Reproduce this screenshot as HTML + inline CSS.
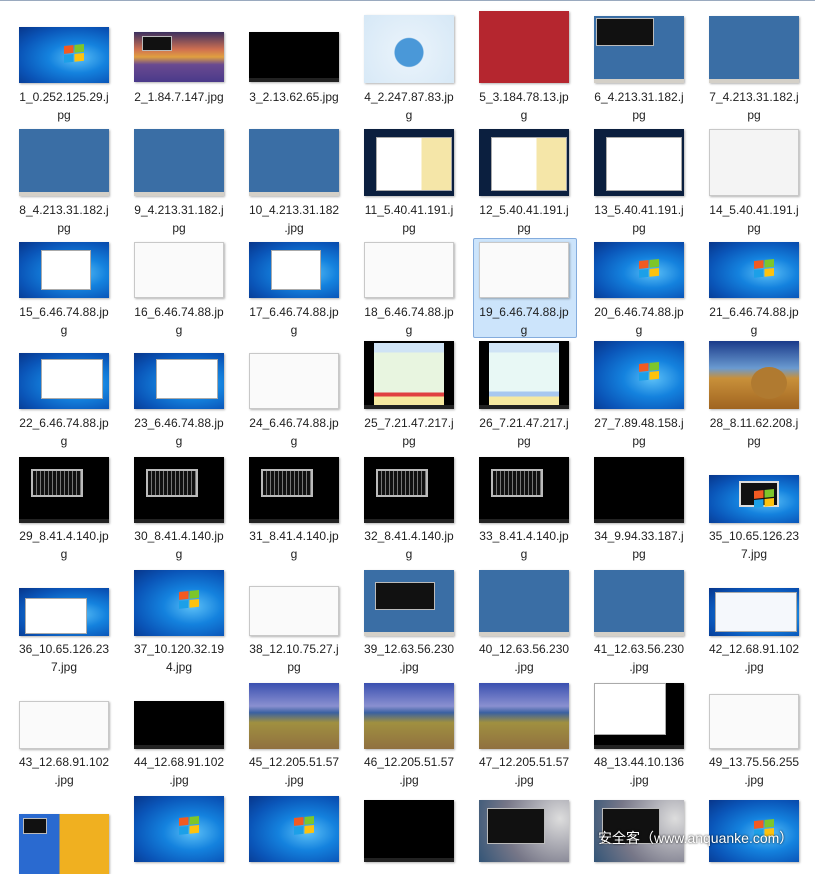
<!DOCTYPE html>
<html><head><meta charset="utf-8"><style>
body{margin:0;width:815px;height:857px;background:#fff;position:relative;overflow:hidden;font-family:"Liberation Sans","Noto Sans CJK SC",sans-serif;}
.top{position:absolute;left:0;top:0;width:815px;height:1px;background:#9aaabf}
.t{position:absolute;width:90px;box-shadow:1px 1px 2px rgba(0,0,0,.3);overflow:hidden}
.l{position:absolute;width:110px;text-align:center;font-size:12px;line-height:18px;color:#1e1e1e}
.sel{position:absolute;left:473px;top:238px;width:104px;height:100px;background:#cce4fb;border:1px solid #84acdd;border-radius:2px;box-sizing:border-box}
.w7{background:radial-gradient(ellipse at 65% 55%,#5cc0f7 0%,#1482de 35%,#0a55b8 70%,#07358a 100%)}
.w7::after{content:"";position:absolute;left:50%;top:32%;width:20px;height:17px;background:linear-gradient(90deg,#f25a22 0 48%,transparent 48% 52%,#7dc62a 52%) top/100% 46% no-repeat,linear-gradient(90deg,#1ca0e8 0 48%,transparent 48% 52%,#fdc20e 52%) bottom/100% 46% no-repeat;transform:skewY(-6deg)}
.bl{background:#3a6ea5}
.bl::after,.bk::after{content:"";position:absolute;left:0;bottom:0;width:100%;height:4px;background:#d4d0c8}
.bk{background:#000}
.bk::after{background:#222}
.wh{background:#fafafa;border:1px solid #c8c8c8;box-sizing:border-box}
.win{position:absolute;background:#fff;border:1px solid #aaa;z-index:1}
.cmd{position:absolute;background:#111;border:2px solid #bbb}
.wm{position:absolute;left:598px;top:828px;color:#fff;font-size:14px;text-shadow:0 0 2px #000}
</style></head><body>
<div class="top"></div>
<div class="sel"></div>

<div class="t w7" style="left:19px;top:27px;height:56px"></div>
<div class="t" style="left:134px;top:32px;height:50px;background:linear-gradient(#3a3060,#d07050 35%,#e0a040 50%,#6a4a90 65%,#4a3a8a)"><div class="cmd" style="left:8px;top:4px;width:28px;height:13px;border-width:1px"></div></div>
<div class="t bk" style="left:249px;top:32px;height:50px"></div>
<div class="t" style="left:364px;top:15px;height:68px;background:radial-gradient(circle at 50% 55%,#4a98d8 0 14px,#e6f1fa 15px,#d6e8f6)"></div>
<div class="t" style="left:479px;top:11px;height:72px;background:#b5262f"></div>
<div class="t bl" style="left:594px;top:16px;height:67px"><div class="cmd" style="left:2px;top:2px;width:56px;height:26px;border-width:1px"></div></div>
<div class="t bl" style="left:709px;top:16px;height:67px"></div>

<div class="l" style="left:9px;top:88px">1_0.252.125.29.j<br>pg</div>
<div class="l" style="left:124px;top:88px">2_1.84.7.147.jpg</div>
<div class="l" style="left:239px;top:88px">3_2.13.62.65.jpg</div>
<div class="l" style="left:354px;top:88px">4_2.247.87.83.jp<br>g</div>
<div class="l" style="left:469px;top:88px">5_3.184.78.13.jp<br>g</div>
<div class="l" style="left:584px;top:88px">6_4.213.31.182.j<br>pg</div>
<div class="l" style="left:699px;top:88px">7_4.213.31.182.j<br>pg</div>

<div class="t bl" style="left:19px;top:129px;height:67px"></div>
<div class="t bl" style="left:134px;top:129px;height:67px"></div>
<div class="t bl" style="left:249px;top:129px;height:67px"></div>
<div class="t" style="left:364px;top:129px;height:67px;background:#0b1f3f"><div class="win" style="left:12px;top:8px;width:74px;height:52px;background:linear-gradient(90deg,#fff 60%,#f5e6a8 60%)"></div></div>
<div class="t" style="left:479px;top:129px;height:67px;background:#0b1f3f"><div class="win" style="left:12px;top:8px;width:74px;height:52px;background:linear-gradient(90deg,#fff 60%,#f5e6a8 60%)"></div></div>
<div class="t" style="left:594px;top:129px;height:67px;background:#0b1f3f"><div class="win" style="left:12px;top:8px;width:74px;height:52px"></div></div>
<div class="t wh" style="left:709px;top:129px;height:67px;background:#f4f4f4"></div>

<div class="l" style="left:9px;top:201px">8_4.213.31.182.j<br>pg</div>
<div class="l" style="left:124px;top:201px">9_4.213.31.182.j<br>pg</div>
<div class="l" style="left:239px;top:201px">10_4.213.31.182<br>.jpg</div>
<div class="l" style="left:354px;top:201px">11_5.40.41.191.j<br>pg</div>
<div class="l" style="left:469px;top:201px">12_5.40.41.191.j<br>pg</div>
<div class="l" style="left:584px;top:201px">13_5.40.41.191.j<br>pg</div>
<div class="l" style="left:699px;top:201px">14_5.40.41.191.j<br>pg</div>

<div class="t w7" style="left:19px;top:242px;height:56px"><div class="win" style="left:22px;top:8px;width:48px;height:38px"></div></div>
<div class="t wh" style="left:134px;top:242px;height:56px"></div>
<div class="t w7" style="left:249px;top:242px;height:56px"><div class="win" style="left:22px;top:8px;width:48px;height:38px"></div></div>
<div class="t wh" style="left:364px;top:242px;height:56px"></div>
<div class="t wh" style="left:479px;top:242px;height:56px"></div>
<div class="t w7" style="left:594px;top:242px;height:56px"></div>
<div class="t w7" style="left:709px;top:242px;height:56px"></div>

<div class="l" style="left:9px;top:303px">15_6.46.74.88.jp<br>g</div>
<div class="l" style="left:124px;top:303px">16_6.46.74.88.jp<br>g</div>
<div class="l" style="left:239px;top:303px">17_6.46.74.88.jp<br>g</div>
<div class="l" style="left:354px;top:303px">18_6.46.74.88.jp<br>g</div>
<div class="l" style="left:469px;top:303px">19_6.46.74.88.jp<br>g</div>
<div class="l" style="left:584px;top:303px">20_6.46.74.88.jp<br>g</div>
<div class="l" style="left:699px;top:303px">21_6.46.74.88.jp<br>g</div>

<div class="t w7" style="left:19px;top:353px;height:56px"><div class="win" style="left:22px;top:6px;width:60px;height:38px"></div></div>
<div class="t w7" style="left:134px;top:353px;height:56px"><div class="win" style="left:22px;top:6px;width:60px;height:38px"></div></div>
<div class="t wh" style="left:249px;top:353px;height:56px"></div>
<div class="t bk" style="left:364px;top:341px;height:68px"><div style="position:absolute;left:10px;top:2px;width:70px;height:62px;background:linear-gradient(#cfe3f5 0 15%,#e8f5e0 15% 80%,#e04040 80% 86%,#f6e9a0 86%)"></div></div>
<div class="t bk" style="left:479px;top:341px;height:68px"><div style="position:absolute;left:10px;top:2px;width:70px;height:62px;background:linear-gradient(#cfe3f5 0 15%,#e8f8f5 15% 78%,#a8c8ef 78% 86%,#f6e9a0 86%)"></div></div>
<div class="t w7" style="left:594px;top:341px;height:68px"></div>
<div class="t" style="left:709px;top:341px;height:68px;background:linear-gradient(#1a3a8a,#6a9ad0 40%,#c8903a 55%,#a06420)"><div style="position:absolute;left:42px;top:26px;width:36px;height:32px;border-radius:50%;background:#b07a30"></div></div>

<div class="l" style="left:9px;top:414px">22_6.46.74.88.jp<br>g</div>
<div class="l" style="left:124px;top:414px">23_6.46.74.88.jp<br>g</div>
<div class="l" style="left:239px;top:414px">24_6.46.74.88.jp<br>g</div>
<div class="l" style="left:354px;top:414px">25_7.21.47.217.j<br>pg</div>
<div class="l" style="left:469px;top:414px">26_7.21.47.217.j<br>pg</div>
<div class="l" style="left:584px;top:414px">27_7.89.48.158.j<br>pg</div>
<div class="l" style="left:699px;top:414px">28_8.11.62.208.j<br>pg</div>

<div class="t bk" style="left:19px;top:457px;height:66px"><div class="cmd" style="left:12px;top:12px;width:48px;height:24px;background:repeating-linear-gradient(90deg,#111 0 3px,#777 3px 4px)"></div></div>
<div class="t bk" style="left:134px;top:457px;height:66px"><div class="cmd" style="left:12px;top:12px;width:48px;height:24px;background:repeating-linear-gradient(90deg,#111 0 3px,#777 3px 4px)"></div></div>
<div class="t bk" style="left:249px;top:457px;height:66px"><div class="cmd" style="left:12px;top:12px;width:48px;height:24px;background:repeating-linear-gradient(90deg,#111 0 3px,#777 3px 4px)"></div></div>
<div class="t bk" style="left:364px;top:457px;height:66px"><div class="cmd" style="left:12px;top:12px;width:48px;height:24px;background:repeating-linear-gradient(90deg,#111 0 3px,#777 3px 4px)"></div></div>
<div class="t bk" style="left:479px;top:457px;height:66px"><div class="cmd" style="left:12px;top:12px;width:48px;height:24px;background:repeating-linear-gradient(90deg,#111 0 3px,#777 3px 4px)"></div></div>
<div class="t bk" style="left:594px;top:457px;height:66px"></div>
<div class="t w7" style="left:709px;top:475px;height:48px"><div class="cmd" style="left:30px;top:6px;width:36px;height:22px;border-color:#ddd"></div></div>

<div class="l" style="left:9px;top:527px">29_8.41.4.140.jp<br>g</div>
<div class="l" style="left:124px;top:527px">30_8.41.4.140.jp<br>g</div>
<div class="l" style="left:239px;top:527px">31_8.41.4.140.jp<br>g</div>
<div class="l" style="left:354px;top:527px">32_8.41.4.140.jp<br>g</div>
<div class="l" style="left:469px;top:527px">33_8.41.4.140.jp<br>g</div>
<div class="l" style="left:584px;top:527px">34_9.94.33.187.j<br>pg</div>
<div class="l" style="left:699px;top:527px">35_10.65.126.23<br>7.jpg</div>

<div class="t w7" style="left:19px;top:588px;height:48px"><div class="win" style="left:6px;top:10px;width:60px;height:34px"></div></div>
<div class="t w7" style="left:134px;top:570px;height:66px"></div>
<div class="t wh" style="left:249px;top:586px;height:50px"></div>
<div class="t bl" style="left:364px;top:570px;height:66px"><div class="cmd" style="left:11px;top:12px;width:58px;height:26px;border-width:1px"></div></div>
<div class="t bl" style="left:479px;top:570px;height:66px"></div>
<div class="t bl" style="left:594px;top:570px;height:66px"></div>
<div class="t w7" style="left:709px;top:588px;height:48px"><div class="win" style="left:6px;top:4px;width:80px;height:38px;background:#f5f8fc"></div></div>

<div class="l" style="left:9px;top:640px">36_10.65.126.23<br>7.jpg</div>
<div class="l" style="left:124px;top:640px">37_10.120.32.19<br>4.jpg</div>
<div class="l" style="left:239px;top:640px">38_12.10.75.27.j<br>pg</div>
<div class="l" style="left:354px;top:640px">39_12.63.56.230<br>.jpg</div>
<div class="l" style="left:469px;top:640px">40_12.63.56.230<br>.jpg</div>
<div class="l" style="left:584px;top:640px">41_12.63.56.230<br>.jpg</div>
<div class="l" style="left:699px;top:640px">42_12.68.91.102<br>.jpg</div>

<div class="t wh" style="left:19px;top:701px;height:48px"></div>
<div class="t bk" style="left:134px;top:701px;height:48px"></div>
<div class="t" style="left:249px;top:683px;height:66px;background:linear-gradient(#3a50b0,#8a90d0 35%,#3a60a0 45%,#a09040 60%,#907040)"></div>
<div class="t" style="left:364px;top:683px;height:66px;background:linear-gradient(#3a50b0,#8a90d0 35%,#3a60a0 45%,#a09040 60%,#907040)"></div>
<div class="t" style="left:479px;top:683px;height:66px;background:linear-gradient(#3a50b0,#8a90d0 35%,#3a60a0 45%,#a09040 60%,#907040)"></div>
<div class="t bk" style="left:594px;top:683px;height:66px"><div style="position:absolute;left:0;top:0;width:70px;height:50px;background:#fff;border:1px solid #aaa"></div></div>
<div class="t wh" style="left:709px;top:694px;height:55px"></div>

<div class="l" style="left:9px;top:753px">43_12.68.91.102<br>.jpg</div>
<div class="l" style="left:124px;top:753px">44_12.68.91.102<br>.jpg</div>
<div class="l" style="left:239px;top:753px">45_12.205.51.57<br>.jpg</div>
<div class="l" style="left:354px;top:753px">46_12.205.51.57<br>.jpg</div>
<div class="l" style="left:469px;top:753px">47_12.205.51.57<br>.jpg</div>
<div class="l" style="left:584px;top:753px">48_13.44.10.136<br>.jpg</div>
<div class="l" style="left:699px;top:753px">49_13.75.56.255<br>.jpg</div>

<div class="t" style="left:19px;top:814px;height:60px;background:linear-gradient(90deg,#2a6ad0 0 45%,#f0b020 45%)"><div class="cmd" style="left:4px;top:4px;width:22px;height:14px;border-width:1px"></div></div>
<div class="t w7" style="left:134px;top:796px;height:66px"></div>
<div class="t w7" style="left:249px;top:796px;height:66px"></div>
<div class="t bk" style="left:364px;top:800px;height:62px"></div>
<div class="t" style="left:479px;top:800px;height:62px;background:radial-gradient(circle at 90% 30%,#ddd,#778 60%,#357)"><div class="cmd" style="left:8px;top:8px;width:56px;height:34px;border-width:1px"></div></div>
<div class="t" style="left:594px;top:800px;height:62px;background:radial-gradient(circle at 90% 30%,#ddd,#778 60%,#357)"><div class="cmd" style="left:8px;top:8px;width:56px;height:34px;border-width:1px"></div></div>
<div class="t w7" style="left:709px;top:800px;height:62px"></div>

<div class="wm">安全客（www.anquanke.com）</div>
</body></html>
